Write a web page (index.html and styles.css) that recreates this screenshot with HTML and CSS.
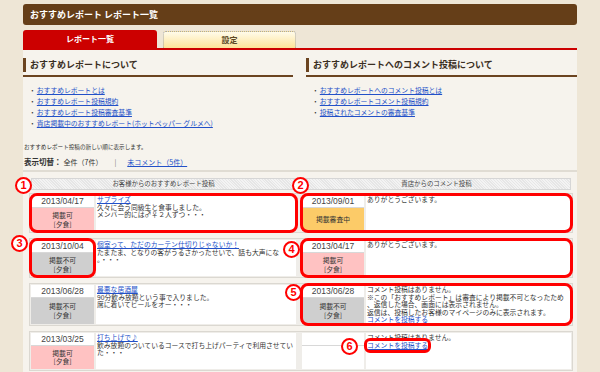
FILE: index.html
```html
<!DOCTYPE html>
<html lang="ja">
  <head>
    <meta charset="UTF-8" />
    <title>おすすめレポート レポート一覧</title>
    <link rel="stylesheet" href="styles.css">
  </head>
  <body>
    <div class="page">
      <h1 class="title-bar">おすすめレポート レポート一覧</h1>
      <ul class="tabs">
        <li class="tab active"><a href="#">レポート一覧</a></li>
        <li class="tab plain"><a href="#">設定</a></li>
      </ul>
      <div class="panel">
        <!-- 説明リンク -->
        <div class="about">
          <div class="about-box">
            <div class="sec-head"><h2>おすすめレポートについて</h2></div>
            <ul class="links">
              <li><a href="#">おすすめレポートとは</a></li>
              <li><a href="#">おすすめレポート投稿規約</a></li>
              <li><a href="#">おすすめレポート投稿審査基準</a></li>
              <li><a href="#">貴店掲載中のおすすめレポート(ホットペッパー グルメへ)</a></li>
            </ul>
          </div>
          <div class="about-box">
            <div class="sec-head"><h2>おすすめレポートへのコメント投稿について</h2></div>
            <ul class="links">
              <li><a href="#">おすすめレポートへのコメント投稿とは</a></li>
              <li><a href="#">おすすめレポートコメント投稿規約</a></li>
              <li><a href="#">投稿されたコメントの審査基準</a></li>
            </ul>
          </div>
        </div>
        <p class="note">おすすめレポート投稿の新しい順に表示します。</p>
        <div class="filter">
          <b>表示切替：</b><span class="all">全件（7件）</span><span class="sep">|</span><a href="#">未コメント（5件）</a>
        </div>

        <!-- レポート一覧 -->
        <div class="report-list">
          <div class="list-head">
            <div class="head-cell left">お客様からのおすすめレポート投稿</div>
            <div class="head-cell right">貴店からのコメント投稿</div>
          </div>

          <div class="report-row">
            <div class="group left hl">
              <span class="num n1">1</span>
              <div class="side">
                <div class="date">2013/04/17</div>
                <div class="status ok">掲載可<br>[夕食]</div>
              </div>
              <div class="body">
                <a href="#">サプライズ</a><br>
                久々に会う同級生と食事しました。<br>
                メンバー的には♂♀２人ずつ・・・
              </div>
            </div>
            <div class="group right hl">
              <span class="num n2">2</span>
              <div class="side">
                <div class="date">2013/09/01</div>
                <div class="status wait">掲載審査中</div>
              </div>
              <div class="body">ありがとうございます。</div>
            </div>
          </div>

          <div class="report-row">
            <div class="group left">
              <div class="side hl">
                <span class="num n3">3</span>
                <div class="date">2013/10/04</div>
                <div class="status ng">掲載不可<br>[夕食]</div>
              </div>
              <div class="body">
                <a href="#">個室って、ただのカーテン仕切りじゃないか！</a><br>
                たまたま、となりの客がうるさかったせいで、話も大声にな<br>
                。・・・
              </div>
            </div>
            <div class="group right hl">
              <span class="num n4">4</span>
              <div class="side">
                <div class="date">2013/04/17</div>
                <div class="status ok">掲載可<br>[夕食]</div>
              </div>
              <div class="body">ありがとうございます。</div>
            </div>
          </div>

          <div class="report-row">
            <div class="group left">
              <div class="side">
                <div class="date">2013/06/28</div>
                <div class="status ng">掲載不可<br>[夕食]</div>
              </div>
              <div class="body">
                <a href="#">最悪な居酒屋</a><br>
                90分飲み放題という事で入りました。<br>
                席に着いてビールをオー・・・
              </div>
            </div>
            <div class="group right hl">
              <span class="num n5">5</span>
              <div class="side">
                <div class="date">2013/06/28</div>
                <div class="status ng">掲載不可<br>[夕食]</div>
              </div>
              <div class="body">
                コメント投稿はありません。<br>
                ※この「おすすめレポート」は審査により掲載不可となったため<br>
                、返信した場合、画面には表示されません。<br>
                返信は、投稿したお客様のマイページのみに表示されます。<br>
                <a href="#">コメントを投稿する</a>
              </div>
            </div>
          </div>

          <div class="report-row">
            <div class="group left">
              <div class="side">
                <div class="date">2013/03/25</div>
                <div class="status ok">掲載可<br>[夕食]</div>
              </div>
              <div class="body">
                <a href="#">打ち上げで♪</a><br>
                飲み放題のついているコースで打ち上げパーティで利用させてい<br>
                た・・・
              </div>
            </div>
            <div class="group right">
              <div class="side">
                <div class="date"></div>
                <div class="status none"></div>
              </div>
              <div class="body">
                コメント投稿はありません。<br>
                <a class="post hl" href="#"><span class="num n6">6</span>コメントを投稿する</a>
              </div>
            </div>
          </div>
        </div>
      </div>
    </div>
  </body>
</html>
```

FILE: styles.css
```css
* {
  margin: 0;
  padding: 0;
  box-sizing: border-box;
}
ul {
  list-style: none;
}
body {
  background: #eee6d6;
  font-family: "Noto Sans CJK JP", sans-serif;
  color: #333;
}
a {
  color: #2250c8;
}
.page {
  width: 554px;
  margin: 0 auto;
  padding-top: 4px;
}
/* 
  タイトルとタブ
*/
.title-bar {
  height: 21px;
  padding-left: 7px;
  background: #653e18;
  border-radius: 3px;
  color: #fff;
  font-size: 9px;
  line-height: 21px;
  font-weight: bold;
}
.tabs {
  display: flex;
  align-items: flex-end;
  gap: 6px;
  height: 20px;
  margin-top: 5px;
  border-bottom: 2px solid #cc0000;
}
.tab {
  width: 134px;
  height: 18px;
  border-radius: 3px 3px 0 0;
  text-align: center;
  font-size: 8px;
  font-weight: bold;
  line-height: 18px;
}
.tab a {
  display: block;
  color: inherit;
  text-decoration: none;
}
.tab.active {
  background: #cc0000;
  color: #fff;
}
.tab.plain {
  width: 133px;
  height: 17px;
  line-height: 16px;
  background: linear-gradient(#fffbea, #fde398);
  border: 1px dotted #a8a8a8;
  border-bottom: none;
  color: #5c4a26;
}
.panel {
  background: #f6f3ed;
  padding: 8px 0 10px;
}
/* 
  説明リンク
*/
.about {
  display: grid;
  grid-template-columns: 270px 271px;
  column-gap: 13px;
}
.sec-head {
  border-bottom: 2px solid #6b4420;
  padding-bottom: 3px;
}
.sec-head h2 {
  height: 14px;
  padding-left: 4px;
  border-left: 3px solid #6b4420;
  font-size: 9px;
  line-height: 14px;
  font-weight: bold;
  color: #3a2e22;
}
.links {
  margin-top: 8px;
  padding-left: 6px;
}
.links li {
  font-size: 6.8px;
  line-height: 11px;
}
.links li::before {
  content: "・";
  margin-right: 1px;
}
.note {
  margin: 13px 0 0 1px;
  font-size: 5.6px;
  line-height: 10px;
}
.filter {
  margin-top: 4px;
  padding: 0 0 2px 1px;
  border-bottom: 2px solid #e0dcd3;
  font-size: 7px;
  line-height: 11px;
}
.filter b {
  font-size: 7.5px;
}
.filter .all {
  margin-left: 2px;
}
.filter .sep {
  margin: 0 11px 0 12px;
  color: #777;
}
/* 
  レポート一覧
*/
.report-list {
  margin: 6px 4px 0 6px;
  display: flex;
  flex-direction: column;
  gap: 5px;
}
.list-head {
  display: flex;
  gap: 6px;
  padding: 0 2px;
  margin-bottom: -2px;
}
.head-cell {
  height: 12px;
  border: 1px solid #d6d6d6;
  background: repeating-linear-gradient(45deg, #f3f3f3 0 1px, #e6e6e6 1px 2px);
  text-align: center;
  font-size: 6.4px;
  line-height: 10px;
  color: #444;
}
.head-cell.left {
  width: 265px;
}
.head-cell.right {
  flex: 1;
}
.report-row {
  display: flex;
  gap: 6px;
  padding: 1px;
  border: 1px solid #dbd8d1;
  background: #efede9;
}
.group {
  display: flex;
  gap: 2px;
  min-height: 36px;
  position: relative;
}
.group.left {
  width: 265px;
}
.group.right {
  flex: 1;
}
.side {
  width: 63px;
  display: flex;
  flex-direction: column;
  background: #fff;
  position: relative;
}
.group.right .side {
  width: 62px;
}
.date {
  height: 13px;
  border-bottom: 1px solid #d8d8d8;
  text-align: center;
  font-family: "Liberation Sans", sans-serif;
  font-size: 8.5px;
  line-height: 13px;
  color: #444;
}
.status {
  flex: 1;
  display: flex;
  align-items: center;
  justify-content: center;
  text-align: center;
  font-size: 6.8px;
  line-height: 8.5px;
  color: #333;
}
.status.ok {
  background: #ffc2c2;
}
.status.ng {
  background: #cfcfcf;
}
.status.wait {
  background: #fccb68;
}
.status.none {
  background: #fff;
}
.body {
  flex: 1;
  background: #fff;
  padding: 1px 2px 0 1px;
  font-size: 6.8px;
  line-height: 7.6px;
  white-space: nowrap;
}
/* 
  赤い注釈
*/
.hl::after {
  content: "";
  position: absolute;
  inset: -2px;
  border: 3px solid #ff0000;
  border-radius: 8px;
  pointer-events: none;
  z-index: 1;
}
.post {
  display: inline-block;
  position: relative;
}
.post.hl::after {
  inset: -4px -3px;
  border-radius: 6px;
}
.num {
  position: absolute;
  width: 17px;
  height: 17px;
  border: 2px solid #ff0000;
  border-radius: 50%;
  background: #fff;
  color: #ff0000;
  font-family: "Liberation Sans", sans-serif;
  font-size: 11px;
  font-weight: bold;
  line-height: 13px;
  text-align: center;
  z-index: 2;
}
.n1 {
  left: -16px;
  top: -18px;
}
.n2 {
  left: -10px;
  top: -18px;
}
.n3 {
  left: -20px;
  top: -5px;
}
.n4 {
  left: -19px;
  top: 1px;
}
.n5 {
  left: -17px;
  top: -1px;
}
.n6 {
  left: -26px;
  top: -4px;
}
```
